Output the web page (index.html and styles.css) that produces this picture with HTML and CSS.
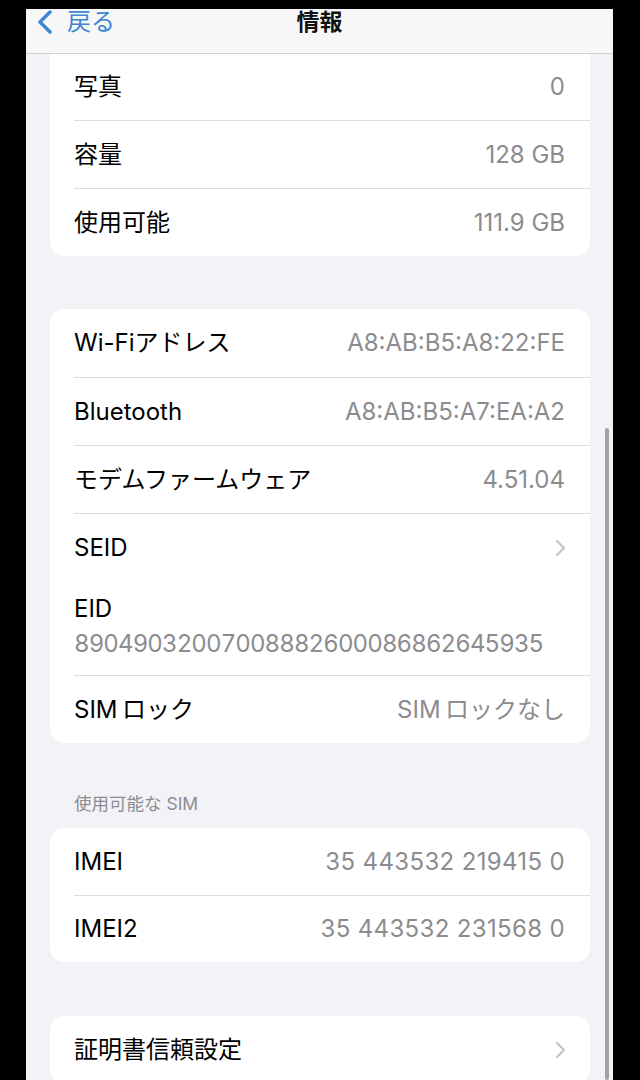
FILE: index.html
```html
<!DOCTYPE html>
<html lang="ja">
<head>
<meta charset="utf-8">
<title>情報</title>
<link rel="stylesheet" href="styles.css">
</head>
<body>
<div class="screen">
  <header class="nav">
    <div class="back">
      <svg class="back-chev" width="18" height="24" viewBox="0 0 18 24"><polyline points="14,2 4,12 14,22" fill="none" stroke="#3d86d4" stroke-width="3.4" stroke-linecap="round" stroke-linejoin="round"/></svg>
      <span class="back-text">戻る</span>
    </div>
    <div class="title">情報</div>
    <div></div>
  </header>
  <main class="content">
    <section class="card card-first">
      <div class="row row-short"><span class="label">写真</span><span class="value">0</span></div>
      <div class="row sep"><span class="label">容量</span><span class="value">128 GB</span></div>
      <div class="row sep"><span class="label">使用可能</span><span class="value">111.9 GB</span></div>
    </section>

    <section class="card gap-top">
      <div class="row"><span class="label">Wi-Fiアドレス</span><span class="value">A8:AB:B5:A8:22:FE</span></div>
      <div class="row sep"><span class="label">Bluetooth</span><span class="value">A8:AB:B5:A7:EA:A2</span></div>
      <div class="row sep"><span class="label">モデムファームウェア</span><span class="value">4.51.04</span></div>
      <div class="row sep"><span class="label">SEID</span>
        <svg class="chev" width="12" height="18" viewBox="0 0 12 18"><polyline points="3,2 10,9 3,16" fill="none" stroke="#c5c5c9" stroke-width="2.2" stroke-linecap="round" stroke-linejoin="round"/></svg>
      </div>
      <div class="row row-tall">
        <span class="label">EID</span>
        <span class="value eid">89049032007008882600086862645935</span>
      </div>
      <div class="row sep"><span class="label">SIM&#8201;ロック</span><span class="value">SIM&#8201;ロックなし</span></div>
    </section>

    <div class="section-header">使用可能な SIM</div>
    <section class="card">
      <div class="row row-67"><span class="label">IMEI</span><span class="value imei">35 443532 219415 0</span></div>
      <div class="row row-67 sep"><span class="label">IMEI2</span><span class="value imei">35 443532 231568 0</span></div>
    </section>

    <section class="card gap-top2">
      <div class="row"><span class="label">証明書信頼設定</span>
        <svg class="chev" width="12" height="18" viewBox="0 0 12 18"><polyline points="3,2 10,9 3,16" fill="none" stroke="#c5c5c9" stroke-width="2.2" stroke-linecap="round" stroke-linejoin="round"/></svg>
      </div>
    </section>
  </main>
  <div class="scroll-indicator"></div>
</div>
</body>
</html>
```
FILE: styles.css
```css
html, body {
  margin: 0;
  padding: 0;
  background: #000;
}
body {
  font-family: "Inter", "Noto Sans CJK JP", "Noto Sans", sans-serif;
  padding: 9px 27px 0 26px;
  height: 1080px;
  box-sizing: border-box;
  overflow: hidden;
}
.screen {
  position: relative;
  height: 1071px;
  background: #f2f2f7;
}
.nav {
  height: 44px;
  background: #f7f7f8;
  border-bottom: 1px solid #d2d2d6;
  display: grid;
  grid-template-columns: 1fr auto 1fr;
  align-items: start;
}
.back {
  display: flex;
  align-items: center;
  padding-left: 10px;
  gap: 13px;
}
.back-chev { display: block; }
.back-text {
  color: #3d86d4;
  font-size: 24px;
  line-height: 26px;
}
.title {
  font-size: 23px;
  font-weight: 700;
  color: #111;
  line-height: 26px;
}
.content {
  padding: 0 23px 0 24px;
}
.card {
  background: #fff;
  border-radius: 14px;
  overflow: hidden;
}
.card-first {
  border-top-left-radius: 0;
  border-top-right-radius: 0;
}
.gap-top {
  margin-top: 53px;
}
.gap-top2 {
  margin-top: 54px;
}
.row {
  height: 68px;
  margin-left: 24px;
  padding-right: 25px;
  display: flex;
  align-items: center;
  justify-content: space-between;
  box-sizing: border-box;
}
.row-short { height: 66px; }
.row-67 { height: 67px; }
.sep { border-top: 1px solid #dcdce0; }
.label {
  font-size: 24px;
  color: #000;
  line-height: 30px;
}
.value {
  font-size: 24px;
  color: #8c8c90;
  line-height: 30px;
}
.imei { letter-spacing: 0.35px; }
.chev { display: block; margin-right: -1px; }
.row-tall {
  height: 94px;
  flex-direction: column;
  align-items: flex-start;
  justify-content: flex-start;
  padding-top: 13px;
}
.eid {
  margin-top: 5px;
  font-variant-numeric: tabular-nums;
  letter-spacing: -0.9px;
}
.section-header {
  height: 85px;
  box-sizing: border-box;
  padding: 49px 0 0 24px;
  font-size: 17.5px;
  line-height: 24px;
  color: #8c8c90;
}
.scroll-indicator {
  position: absolute;
  left: 579px;
  top: 419px;
  width: 4px;
  height: 652px;
  border-radius: 2px;
  background: #a3a3a7;
}
```
